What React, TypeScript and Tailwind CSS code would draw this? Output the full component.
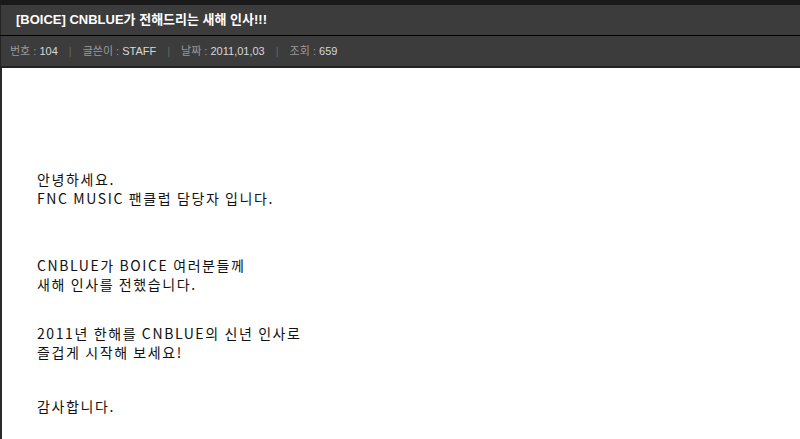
const body = "font-['Noto_Sans_CJK_KR',sans-serif] text-[14px] leading-[19px] tracking-[1.6px] text-[#111]";

const Sep = () => <span className="mx-[11px] text-[#666]">|</span>;

const Meta = ({ label, value }: { label: string; value: string }) => (
	<span>
		<span className="text-[#9a9a9a]">{label} : </span>
		<span className="text-[#d8d8d8]">{value}</span>
	</span>
);

export default function App() {
	return (
		<div className="w-[800px] h-[439px] overflow-hidden bg-white">
			<div className="h-[5px] bg-[#1a1a1a]" />
			<div className="h-[30px] bg-[#3c3c3c] border-l border-[#222] flex items-center pl-[15px] font-['Liberation_Sans','Noto_Sans_CJK_KR',sans-serif] text-[13px] font-bold text-white">
				[BOICE] CNBLUE가 전해드리는 새해 인사!!!
			</div>
			<div className="h-px bg-black" />
			<div className="h-[30px] bg-[#3c3c3c] border-l border-[#222] flex items-center pl-[9px] font-['Liberation_Sans','Noto_Sans_CJK_KR',sans-serif] text-[11px]">
				<Meta label="번호" value="104" />
				<Sep />
				<Meta label="글쓴이" value="STAFF" />
				<Sep />
				<Meta label="날짜" value="2011,01,03" />
				<Sep />
				<Meta label="조회" value="659" />
			</div>
			<div className="h-[2px] bg-[#222]" />
			<div className={`border-l-2 border-[#2a2a2a] h-full pl-[35px] pt-[102px] ${body}`}>
				<p>안녕하세요.</p>
				<p>FNC MUSIC 팬클럽 담당자 입니다.</p>
				<p className="mt-[48px]">CNBLUE가 BOICE 여러분들께</p>
				<p>새해 인사를 전했습니다.</p>
				<p className="mt-[30px]">2011년 한해를 CNBLUE의 신년 인사로</p>
				<p>즐겁게 시작해 보세요!</p>
				<p className="mt-[35px]">감사합니다.</p>
			</div>
		</div>
	);
}
